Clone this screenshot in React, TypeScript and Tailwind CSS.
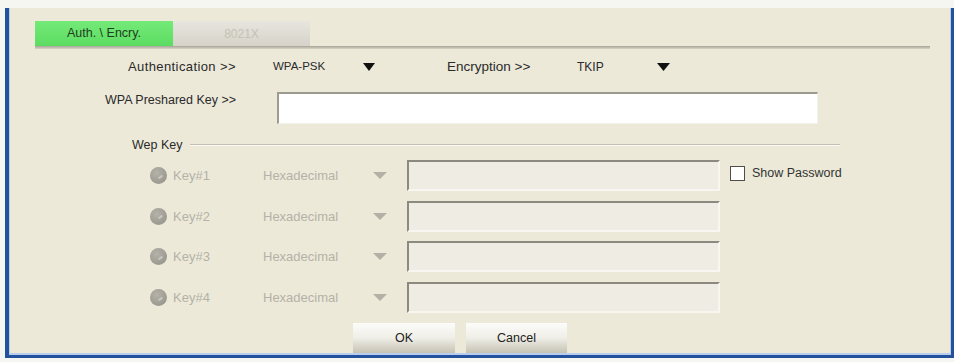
import React from "react";

function Arrow({ color, w, h }: { color: string; w: number; h: number }) {
  return (
    <svg width={w} height={h} viewBox={`0 0 ${w} ${h}`}>
      <polygon points={`0,0 ${w},0 ${w / 2},${h}`} fill={color} />
    </svg>
  );
}

function KeyRow({ n, first }: { n: number; first?: boolean }) {
  return (
    <div className="flex items-center h-[31px]">
      <div className="ml-[140px] w-[17px] h-[17px] rounded-full bg-[radial-gradient(circle_at_40%_35%,#b4b2a9,#9d9b92_65%,#929087)] flex items-center justify-center">
        <div className="w-[5px] h-[2px] rounded-full bg-[#c9c7be] rotate-[-35deg] translate-x-[2px] translate-y-[1px]" />
      </div>
      <div className="ml-[6px] w-[90px] text-[13px] text-[#b4b2a7] leading-none">Key#{n}</div>
      <div className="w-[110px] text-[13px] text-[#b4b2a7] leading-none">Hexadecimal</div>
      <div className="w-[34px] flex items-center">
        <Arrow color="#b3b1a6" w={14} h={7} />
      </div>
      <div className="w-[313px] h-full bg-[#efede3] border-t-2 border-l-2 border-t-[#8b8980] border-l-[#8b8980] border-b-2 border-r-2 border-b-[#f7f6f0] border-r-[#f7f6f0]" />
      {first && (
        <div className="ml-[10px] self-start mt-[6px] flex items-center">
          <div className="w-[15px] h-[15px] bg-white border-[1.5px] border-[#4e4d48]" />
          <span className="ml-[7px] text-[12.5px] text-[#333] leading-none">Show Password</span>
        </div>
      )}
    </div>
  );
}

function Button({ label, w }: { label: string; w: number }) {
  return (
    <div
      className="h-[30px] bg-linear-to-b from-[#fcfcfa] via-[#efeee7] to-[#c6c3b4] flex items-center justify-center text-[12.5px] text-[#222]"
      style={{ width: w }}
    >
      {label}
    </div>
  );
}

export default function App() {
  return (
    <div className="w-[954px] h-[362px] bg-[#f5f5f2] overflow-hidden font-['Liberation_Sans',Arial,sans-serif] pt-[8px]">
      <div className="ml-[5px] w-[949px] border-l-4 border-r-[3px] border-b-[3px] border-[#23519c]">
        <div className="h-[347px] bg-[#ece9d9] border-l border-r border-b-2 border-[#b9cdee] flex flex-col">
          {/* Tabs */}
          <div className="flex ml-[25px] mt-[13px] h-[26px]">
            <div className="w-[138px] h-full bg-linear-to-b from-[#74ea78] to-[#5cdc62] flex items-center justify-center text-[12.5px] text-[#1f3d20]">
              Auth. \ Encry.
            </div>
            <div className="w-[137px] h-full bg-linear-to-b from-[#e7e5dd] to-[#d5d3c9] flex items-center justify-center text-[12px] text-[#c4c2b7]">
              8021X
            </div>
          </div>
          <div className="ml-[25px] w-[895px] h-[3px] bg-linear-to-b from-[#a7a497] to-[#d9d6c9]" />

          {/* Row 1 */}
          <div className="mt-[8px] h-[20px] flex items-center text-[#2a2a2a] leading-none">
            <div className="ml-[118px] w-[145px] text-[13px] tracking-[0.4px]">Authentication &gt;&gt;</div>
            <div className="w-[90px] text-[11.5px]">WPA-PSK</div>
            <div className="w-[84px] flex items-center">
              <Arrow color="#111" w={12} h={8} />
            </div>
            <div className="w-[130px] text-[13.5px]">Encryption &gt;&gt;</div>
            <div className="w-[80px] text-[12px]">TKIP</div>
            <div className="flex items-center">
              <Arrow color="#111" w={13} h={8} />
            </div>
          </div>

          {/* Row 2 */}
          <div className="mt-[15px] flex items-start">
            <div className="ml-[95px] w-[172px] mt-[2px] text-[12.5px] text-[#2a2a2a] leading-none">
              WPA Preshared Key &gt;&gt;
            </div>
            <div className="w-[541px] h-[32px] bg-white border-t-2 border-l-2 border-t-[#9d9b90] border-l-[#9d9b90] border-b border-r border-b-[#f2f1ea] border-r-[#f2f1ea]" />
          </div>

          {/* Wep Key */}
          <div className="mt-[14px] h-[16px] flex items-center">
            <div className="ml-[122px] w-[58px] text-[12.5px] text-[#2a2a2a] leading-none">Wep Key</div>
            <div className="w-[650px] h-[2px] border-t border-t-[#c3c0b3] border-b border-b-[#fbfaf5]" />
          </div>

          {/* Key rows */}
          <div className="mt-[7px] flex flex-col gap-[9.67px]">
            <KeyRow n={1} first />
            <KeyRow n={2} />
            <KeyRow n={3} />
            <KeyRow n={4} />
          </div>

          {/* Buttons */}
          <div className="mt-[10px] ml-[343px] flex gap-[11px]">
            <Button label="OK" w={102} />
            <Button label="Cancel" w={101} />
          </div>
        </div>
      </div>
    </div>
  );
}
